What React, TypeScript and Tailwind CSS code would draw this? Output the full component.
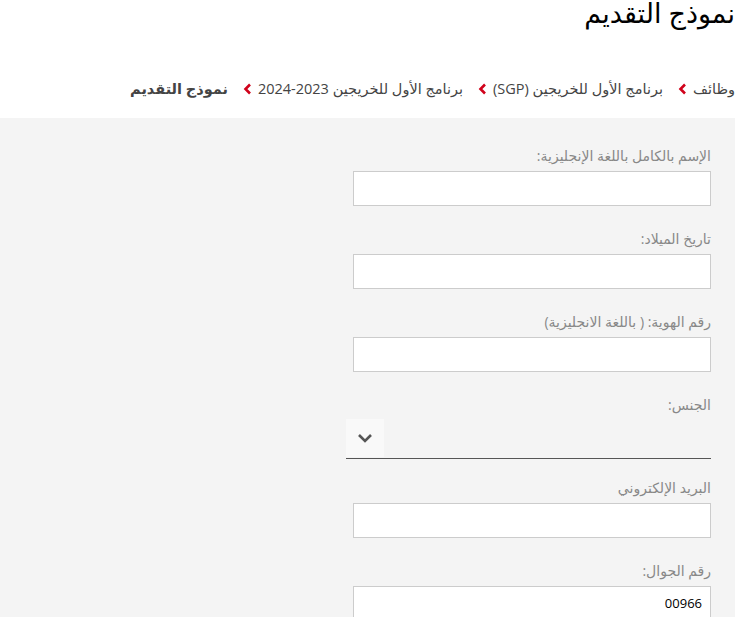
import React from "react";

const Chevron = () => (
  <svg width="9" height="12" viewBox="0 0 9 12" className="mr-[6px] ml-[15px] shrink-0">
    <path d="M7 1.5 L2.5 6 L7 10.5" fill="none" stroke="#d0021b" strokeWidth="2.6" />
  </svg>
);

const Field = ({ label, value }: { label: string; value?: string }) => (
  <div className="mb-[23px]">
    <div className="h-[20px] text-[14px] leading-[20px] text-[#888]">{label}</div>
    <div className="mt-[5px] ml-[7px] h-[35px] border border-[#ccc] bg-white px-[8px] text-[13px] leading-[33px] text-black">
      {value}
    </div>
  </div>
);

export default function App() {
  return (
    <div
      className="w-[753px] h-[617px] overflow-hidden bg-white"
      style={{ fontFamily: '"Open Sans", "Noto Sans", "DejaVu Sans", sans-serif' }}
    >
      <div dir="rtl" className="w-[735px]">
        <h1 className="h-[38px] text-[27px] leading-[25px] font-normal text-black">نموذج التقديم</h1>
        <div className="flex items-center h-[80px] pt-[21px] text-[14.5px] text-[#444]">
          <span>وظائف</span>
          <Chevron />
          <span>برنامج الأول للخريجين (SGP)</span>
          <Chevron />
          <span>برنامج الأول للخريجين 2023-2024</span>
          <Chevron />
          <span className="font-bold">نموذج التقديم</span>
        </div>
        <div className="bg-[#f4f4f4] h-[500px] pt-[28px] pr-[24px]">
          <div className="w-[365px]">
            <Field label="الإسم بالكامل باللغة الإنجليزية:" />
            <Field label="تاريخ الميلاد:" />
            <Field label="رقم الهوية: ( باللغة الانجليزية)" />
            <div className="mb-[19px]">
              <div className="h-[20px] text-[14px] leading-[20px] text-[#888]">الجنس:</div>
              <div className="mt-[4px] h-[40px] border-b border-[#555] flex justify-end">
                <div className="w-[38px] h-[38px] bg-[#f9f9f9] flex items-center justify-center">
                  <svg width="16" height="10" viewBox="0 0 16 10">
                    <path d="M2 2 L8 8 L14 2" fill="none" stroke="#555" strokeWidth="2.6" />
                  </svg>
                </div>
              </div>
            </div>
            <Field label="البريد الإلكتروني" />
            <Field label="رقم الجوال:" value="00966" />
          </div>
        </div>
      </div>
    </div>
  );
}
